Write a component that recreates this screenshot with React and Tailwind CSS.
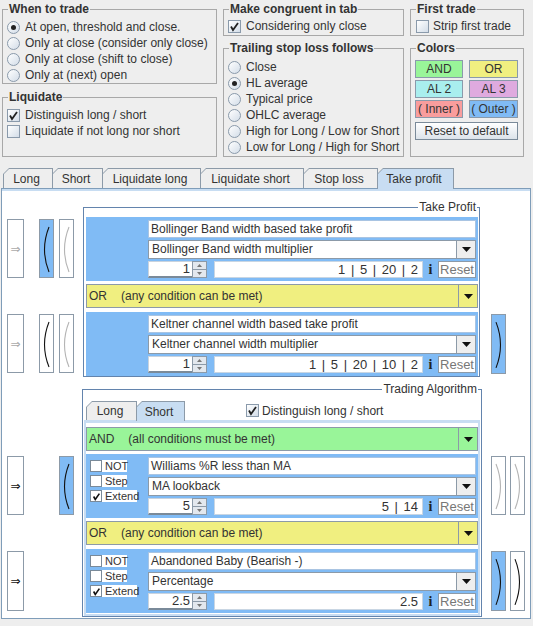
import React from 'react';

const BLUE = 'bg-[#80bbf5]';

const Radio = ({ checked, label }) => (
  <div className="flex items-center h-4">
    <span className="w-[13px] h-[13px] shrink-0 rounded-full border border-[#8a9aab] bg-gradient-to-br from-white to-[#d3dde8] flex items-center justify-center">
      {checked && <span className="w-[5px] h-[5px] rounded-full bg-[#222]" />}
    </span>
    <span className="ml-[5px] leading-4 whitespace-nowrap">{label}</span>
  </div>
);

const Tick = () => (
  <svg width="11" height="11" viewBox="0 0 11 11">
    <path d="M2 5.5 L4 9 L9 2" fill="none" stroke="#222" strokeWidth="1.8" />
  </svg>
);

const Check = ({ checked, label, gap = 'ml-[5px]' }) => (
  <div className="flex items-center h-4">
    <span className="w-[13px] h-[13px] shrink-0 border border-[#8a9aab] bg-gradient-to-br from-white to-[#d3dde8] flex items-center justify-center">
      {checked && <Tick />}
    </span>
    <span className={`${gap} leading-4 whitespace-nowrap`}>{label}</span>
  </div>
);

// titled group box like Swing's etched TitledBorder
const Group = ({ title, className, children, inner }) => (
  <fieldset className={`border border-[#a8a8a8] ${className}`}>
    <legend className="ml-[5px] px-[1px] font-bold leading-[14px]">{title}</legend>
    <div className={inner}>{children}</div>
  </fieldset>
);

const Swatch = ({ bg, children, w = 'w-[48px]' }) => (
  <div className={`${w} h-[18px] border border-[#8a9aab] ${bg} flex items-center justify-center leading-none`}>
    {children}
  </div>
);

const Tri = () => (
  <svg width="9" height="5" viewBox="0 0 9 5">
    <path d="M0 0 H9 L4.5 5 Z" fill="#111" />
  </svg>
);

const Tab = ({ label, w, selected, h = 'h-[20px]' }) => (
  <div
    className={`relative -ml-px first:ml-0 ${w} ${selected ? `${h} z-10 -mb-px pb-0` : h} p-[1px] pb-0 bg-[#8c9aa8] [clip-path:polygon(6px_0,100%_0,100%_100%,0_100%,0_6px)]`}
  >
    <div
      className={`h-full ${selected ? 'bg-[#c8ddf2]' : 'bg-[#eeeeee]'} [clip-path:polygon(5px_0,100%_0,100%_100%,0_100%,0_5px)] flex items-center justify-center pr-[3px] whitespace-nowrap`}
    >
      {label}
    </div>
  </div>
);

const Paren = ({ right, bg = 'bg-white', dark, h = 'h-[59px]' }) => (
  <div className={`w-[15px] ${h} shrink-0 border border-[#8c9aa8] ${bg}`}>
    <svg width="13" height="100%" viewBox="0 0 13 57" preserveAspectRatio="none">
      <path
        d={right ? 'M4 7 Q13 29.5 4 52' : 'M9 7 Q0 29.5 9 52'}
        fill="none"
        stroke={dark ? '#111' : '#b4b4b4'}
        strokeWidth="1.1"
      />
    </svg>
  </div>
);

const Arrow = ({ dark, h = 'h-[59px]' }) => (
  <div className={`w-[17px] ${h} shrink-0 border border-[#8c9aa8] bg-white flex items-center justify-center`}>
    <span className={`font-['DejaVu_Sans',sans-serif] text-[12px] leading-none ${dark ? 'text-[#111]' : 'text-[#aaa]'}`}>⇒</span>
  </div>
);

const Bar = ({ bg, a, b }) => (
  <div className={`h-[24px] border border-[#8c9aa8] ${bg} flex items-center`}>
    <span className="pl-[2px]">{a}</span>
    <span className="ml-[14px] flex-1">{b}</span>
    <div className="w-[19px] h-full border-l border-[#8c9aa8] flex items-center justify-center">
      <Tri />
    </div>
  </div>
);

const Flag = ({ label, checked, w }) => (
  <div className="flex h-[12px]">
    <span className="w-[12px] h-[12px] border border-[#7a8a99] bg-white flex items-center justify-center">
      {checked && (
        <svg width="9" height="9" viewBox="0 0 11 11">
          <path d="M2 5.5 L4 9 L9 2" fill="none" stroke="#111" strokeWidth="2" />
        </svg>
      )}
    </span>
    <span className={`${w} h-[12px] bg-white text-[11px] leading-[12px] pl-[3px]`}>{label}</span>
  </div>
);

const Cond = ({ label, combo, spin, values, flags }) => (
  <div className={`flex h-[64px] ${BLUE}`}>
    <div className="w-[62px] shrink-0 pl-[4px] pt-[6px]">
      {flags && (
        <div className="flex flex-col gap-[3px]">
          <Flag label="NOT" w="w-[25px]" />
          <Flag label="Step" w="w-[25px]" />
          <Flag label="Extend" w="w-[35px]" checked />
        </div>
      )}
    </div>
    <div className="flex-1 pr-[2px] pt-[3px] flex flex-col gap-[2px]">
      <div className="h-[18px] bg-white border border-[#a9c4e2] pl-[2px] leading-[16px] whitespace-nowrap">{label}</div>
      <div className="h-[19px] flex bg-white border border-[#8c9aa8]">
        <span className="flex-1 pl-[3px] leading-[17px] whitespace-nowrap">{combo}</span>
        <div className="w-[19px] border-l border-[#8c9aa8] bg-[#eeeeee] flex items-center justify-center">
          <Tri />
        </div>
      </div>
      <div className="h-[17px] flex">
        <div className="w-[44px] bg-white border-t border-l border-[#c9d3de] border-b-2 border-b-[#7a8a99] text-right pr-[2px] text-[13px] leading-[14px]">
          {spin}
        </div>
        <div className="w-[15px] flex flex-col">
          <div className="h-[9px] border border-[#8c9aa8] bg-[#e3e8ee] flex items-center justify-center">
            <svg width="5" height="3" viewBox="0 0 5 3"><path d="M0 3 H5 L2.5 0 Z" fill="#777" /></svg>
          </div>
          <div className="h-[8px] border border-t-0 border-[#8c9aa8] bg-[#e3e8ee] flex items-center justify-center">
            <svg width="5" height="3" viewBox="0 0 5 3"><path d="M0 0 H5 L2.5 3 Z" fill="#777" /></svg>
          </div>
        </div>
        <div className="ml-[7px] w-[209px] bg-white border border-[#c9d6e3] text-right pr-[4px] text-[13px] leading-[15px] [word-spacing:2px] whitespace-nowrap">
          {values}
        </div>
        <div className="w-[15px] text-center font-['Liberation_Serif',serif] font-bold text-[14px] leading-[17px] text-[#222]">i</div>
        <div className="w-[38px] bg-white border border-[#8c9aa8] text-[#777] text-center leading-[15px] text-[13px]">Reset</div>
      </div>
    </div>
  </div>
);

export default function App() {
  return (
    <div className="w-[533px] h-[626px] overflow-hidden bg-[#eeeeee] text-[12px] text-[#333] font-['Liberation_Sans',Arial,sans-serif]">
      {/* settings groups */}
      <div className="flex pl-[2px] pt-[2px] gap-[6px]">
        <div className="w-[215px] flex flex-col gap-[6px]">
          <Group title="When to trade" className="h-[82px]" inner="pl-[4px] pt-[3px]">
            <Radio checked label="At open, threshold and close." />
            <Radio label="Only at close (consider only close)" />
            <Radio label="Only at close (shift to close)" />
            <Radio label="Only at (next) open" />
          </Group>
          <Group title="Liquidate" className="h-[67px]" inner="pl-[4px] pt-[3px]">
            <Check checked label="Distinguish long / short" />
            <Check label="Liquidate if not long nor short" />
          </Group>
        </div>
        <div className="w-[181px] flex flex-col gap-[5px]">
          <Group title="Make congruent in tab" className="h-[34px]" inner="pl-[4px] pt-[2px]">
            <Check checked label="Considering only close" />
          </Group>
          <Group title="Trailing stop loss follows" className="h-[116px]" inner="pl-[4px] pt-[4px]">
            <Radio label="Close" />
            <Radio checked label="HL average" />
            <Radio label="Typical price" />
            <Radio label="OHLC average" />
            <Radio label="High for Long / Low for Short" />
            <Radio label="Low for Long / High for Short" />
          </Group>
        </div>
        <div className="w-[114px] flex flex-col gap-[5px]">
          <Group title="First trade" className="h-[34px]" inner="pl-[5px] pt-[2px]">
            <Check label="Strip first trade" gap="ml-[4px]" />
          </Group>
          <Group title="Colors" className="h-[116px]" inner="pl-[4px] pt-[5px]">
            <div className="grid grid-cols-[48px_49px] gap-x-[6px] gap-y-[2px]">
              <Swatch bg="bg-[#99f599]">AND</Swatch>
              <Swatch bg="bg-[#f0ef80]" w="w-[49px]">OR</Swatch>
              <Swatch bg="bg-[#a9eeee]">AL 2</Swatch>
              <Swatch bg="bg-[#dfaadf]" w="w-[49px]">AL 3</Swatch>
              <Swatch bg="bg-[#f99d9d]">( Inner )</Swatch>
              <Swatch bg="bg-[#80bbf5]" w="w-[49px]">( Outer )</Swatch>
            </div>
            <div className="mt-[4px] w-[103px] h-[18px] border border-[#7a8a99] bg-gradient-to-b from-white to-[#dce3ea] flex items-center justify-center">
              Reset to default
            </div>
          </Group>
        </div>
      </div>

      {/* main tabbed pane */}
      <div className="ml-[1px] mt-[11px] w-[530px]">
        <div className="flex items-end pl-[2px] h-[20px]">
          <Tab label="Long" w="w-[50px]" />
          <Tab label="Short" w="w-[51px]" />
          <Tab label="Liquidate long" w="w-[99px]" />
          <Tab label="Liquidate short" w="w-[104px]" />
          <Tab label="Stop loss" w="w-[75px]" />
          <Tab label="Take profit" w="w-[77px]" selected h="h-[21px]" />
        </div>
        <div className="border border-[#7f9db9] bg-white pb-[1px]">
          <div className="h-[2px] bg-[#c8ddf2]" />

          {/* Take profit */}
          <div className="flex mt-[9px]">
            <div className="w-[81px] shrink-0 pl-[5px]">
              <div className="flex mt-[19px]">
                <Arrow />
                <div className="ml-[15px]"><Paren bg={BLUE} dark /></div>
                <div className="ml-[5px]"><Paren /></div>
              </div>
              <div className="flex mt-[36px]">
                <Arrow />
                <div className="ml-[15px]"><Paren dark /></div>
                <div className="ml-[5px]"><Paren /></div>
              </div>
            </div>
            <fieldset className="w-[396px] shrink-0 border border-[#6384ad] pl-[2px] pr-[1px]">
              <legend align="right" className="ml-auto mr-[1px] px-[1px] leading-[14px]">Take Profit</legend>
              <div className="pt-[3px]">
                <Cond
                  label="Bollinger Band width based take profit"
                  combo="Bollinger Band width multiplier"
                  spin="1"
                  values="1 | 5 | 20 | 2"
                />
                <div className="mt-[3px]">
                  <Bar bg="bg-[#f0ef80]" a="OR" b="(any condition can be met)" />
                </div>
                <div className="mt-[4px]">
                  <Cond
                    label="Keltner channel width based take profit"
                    combo="Keltner channel width multiplier"
                    spin="1"
                    values="1 | 5 | 20 | 10 | 2"
                  />
                </div>
              </div>
            </fieldset>
            <div className="pl-[11px] pt-[114px]">
              <Paren right bg={BLUE} dark h="h-[60px]" />
            </div>
          </div>

          {/* Trading algorithm */}
          <div className="flex mt-[5px]">
            <div className="w-[80px] shrink-0 pl-[5px]">
              <div className="flex mt-[74px]">
                <Arrow dark />
                <div className="ml-[35px]"><Paren bg={BLUE} dark /></div>
              </div>
              <div className="flex mt-[36px]">
                <Arrow dark h="h-[60px]" />
              </div>
            </div>
            <fieldset className="w-[400px] shrink-0 border border-[#6384ad] px-[1px]">
              <legend align="right" className="ml-auto mr-[2px] px-[1px] leading-[14px]">Trading Algorithm</legend>
              <div className="pt-[5px]">
                <div className="flex items-end h-[19px] pl-[2px]">
                  <Tab label="Long" w="w-[51px]" h="h-[19px]" />
                  <Tab label="Short" w="w-[49px]" h="h-[20px]" selected />
                  <div className="ml-[61px] self-center">
                    <Check checked label="Distinguish long / short" gap="ml-[3px]" />
                  </div>
                </div>
                <div className="border-2 border-t-[3px] border-[#c8ddf2] pt-[4px] pb-[1px] bg-white">
                  <Bar bg="bg-[#99f599]" a="AND" b="(all conditions must be met)" />
                  <div className="mt-[3px]">
                    <Cond flags label="Williams %R less than MA" combo="MA lookback" spin="5" values="5 | 14" />
                  </div>
                  <div className="mt-[3px]">
                    <Bar bg="bg-[#f0ef80]" a="OR" b="(any condition can be met)" />
                  </div>
                  <div className="mt-[4px]">
                    <Cond flags label="Abandoned Baby (Bearish -)" combo="Percentage" spin="2.5" values="2.5" />
                  </div>
                </div>
              </div>
            </fieldset>
            <div className="pl-[9px]">
              <div className="flex mt-[74px]">
                <Paren right />
                <div className="ml-[4px]"><Paren right /></div>
              </div>
              <div className="flex mt-[36px]">
                <Paren right bg={BLUE} dark h="h-[60px]" />
                <div className="ml-[4px]"><Paren right dark h="h-[60px]" /></div>
              </div>
            </div>
          </div>
        </div>
      </div>
    </div>
  );
}
